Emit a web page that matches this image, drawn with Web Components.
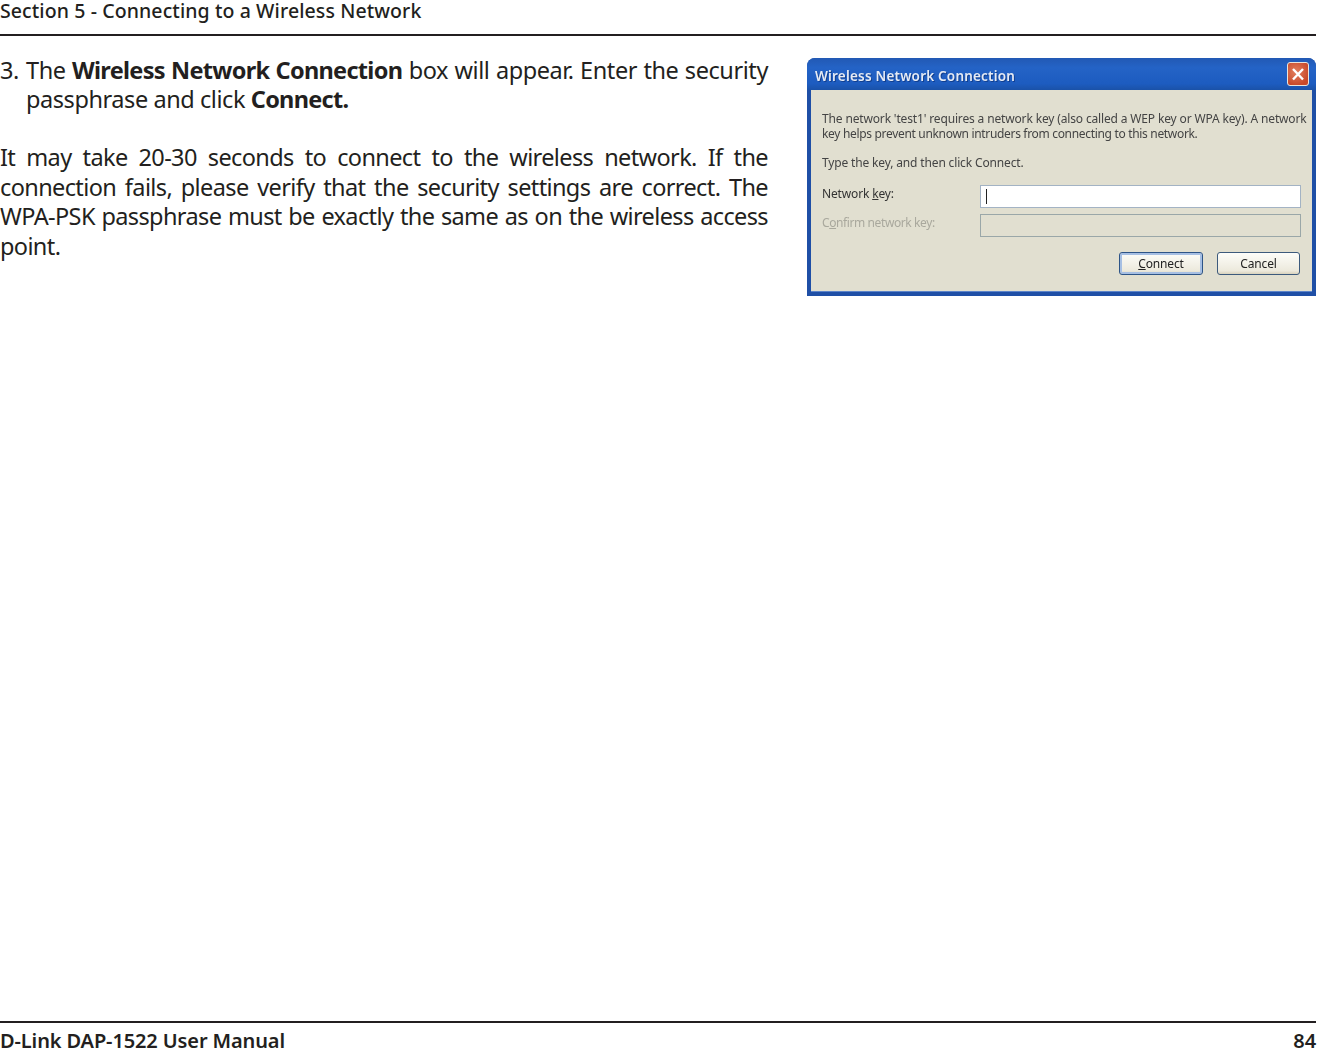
<!DOCTYPE html>
<html>
<head>
<meta charset="utf-8">
<title>D-Link DAP-1522 User Manual</title>
<style>
  html, body { margin: 0; padding: 0; background: #fff; }
</style>
</head>
<body>
<manual-page>
  <manual-header slot="header">Section 5 - Connecting to a Wireless Network</manual-header>
  <manual-step number="3.">The <b>Wireless Network Connection</b> box will appear. Enter the security passphrase and click <b>Connect.</b></manual-step>
  <manual-para>It may take 20-30 seconds to connect to the wireless network. If the connection fails, please verify that the security settings are correct. The WPA-PSK passphrase must be exactly the same as on the wireless access point.</manual-para>
  <xp-dialog slot="figure" heading="Wireless Network Connection"></xp-dialog>
  <manual-footer slot="footer" page="84">D-Link DAP-1522 User Manual</manual-footer>
</manual-page>

<script>
const FONT = "'Noto Sans', 'Open Sans', sans-serif";

class ManualPage extends HTMLElement {
  constructor() {
    super();
    this.attachShadow({ mode: 'open' }).innerHTML = `
      <style>
        :host { display: flex; flex-direction: column; width: 1316px; height: 1049px; font-family: ${FONT}; color: #231f20; }
        .content { flex: 1; display: flex; padding-top: 20px; }
        .text { width: 768px; }
        .figure { margin-left: 39px; padding-top: 2px; }
      </style>
      <slot name="header"></slot>
      <div class="content">
        <div class="text"><slot></slot></div>
        <div class="figure"><slot name="figure"></slot></div>
      </div>
      <slot name="footer"></slot>`;
  }
}

class ManualHeader extends HTMLElement {
  constructor() {
    super();
    this.attachShadow({ mode: 'open' }).innerHTML = `
      <style>
        :host { display: block; height: 34px; border-bottom: 2px solid #231f20; font-size: 19.5px; font-weight: 500; line-height: 22px; letter-spacing: 0.1px; white-space: nowrap; }
      </style>
      <slot></slot>`;
  }
}

class ManualFooter extends HTMLElement {
  constructor() {
    super();
    this.attachShadow({ mode: 'open' }).innerHTML = `
      <style>
        :host { display: flex; justify-content: space-between; box-sizing: border-box; height: 28px; padding-top: 9px; border-top: 2px solid #231f20; font-size: 20px; font-weight: 600; line-height: 17px; letter-spacing: -0.12px; white-space: nowrap; }
      </style>
      <span><slot></slot></span><span class="page"></span>`;
  }
  connectedCallback() {
    this.shadowRoot.querySelector('.page').textContent = this.getAttribute('page');
  }
}

class ManualStep extends HTMLElement {
  constructor() {
    super();
    this.attachShadow({ mode: 'open' }).innerHTML = `
      <style>
        :host { display: flex; font-size: 23.5px; line-height: 29px; letter-spacing: -0.43px; margin-bottom: 29px; }
        .num { flex: 0 0 26px; }
        .body { flex: 1; text-align: justify; }
        ::slotted(b) { font-weight: 700; letter-spacing: -0.7px; }
      </style>
      <span class="num"></span><span class="body"><slot></slot></span>`;
  }
  connectedCallback() {
    this.shadowRoot.querySelector('.num').textContent = this.getAttribute('number');
  }
}

class ManualPara extends HTMLElement {
  constructor() {
    super();
    this.attachShadow({ mode: 'open' }).innerHTML = `
      <style>
        :host { display: block; font-size: 23.5px; line-height: 29.6px; letter-spacing: -0.62px; text-align: justify; }
      </style>
      <slot></slot>`;
  }
}

class XpButton extends HTMLElement {
  constructor() {
    super();
    this.attachShadow({ mode: 'open' }).innerHTML = `
      <style>
        :host { display: flex; align-items: center; justify-content: center; box-sizing: border-box; width: 83px; height: 23px; border: 1px solid #3c5a7c; border-radius: 3px; background: linear-gradient(#fdfdf9, #ece9dc 85%, #d8d2bd); font-size: 12px; color: #222; }
        :host([default]) { width: 84px; box-shadow: inset 0 0 0 2px #a6bfe3; border-color: #2d5487; }
      </style>
      <span><slot></slot></span>`;
  }
}

class XpField extends HTMLElement {
  constructor() {
    super();
    this.attachShadow({ mode: 'open' }).innerHTML = `
      <style>
        :host { display: flex; align-items: center; height: 23px; font-size: 12px; color: #333; }
        :host([disabled]) { color: #a9a89d; letter-spacing: -0.4px; }
        .label { width: 158px; padding-bottom: 6px; }
        .box { flex: 1; box-sizing: border-box; height: 23px; border: 1px solid #a3b3c4; background: #fff; padding: 3px 5px; }
        :host([disabled]) .box { background: #e1dfd0; border-color: #9aa7a8; }
        .caret { display: block; width: 1px; height: 15px; background: #222; }
        :host([disabled]) .caret { display: none; }
      </style>
      <span class="label"><slot></slot></span>
      <span class="box"><span class="caret"></span></span>`;
  }
}

class XpDialog extends HTMLElement {
  constructor() {
    super();
    this.attachShadow({ mode: 'open' }).innerHTML = `
      <style>
        :host { display: flex; flex-direction: column; box-sizing: border-box; width: 509px; height: 238px; border-radius: 8px 8px 0 0; background: #1f4fa6; font-family: ${FONT}; filter: blur(0.3px); }
        .title { flex: 0 0 32px; box-sizing: border-box; display: flex; align-items: center; justify-content: space-between; padding: 0 7px 0 8px; border-radius: 8px 8px 0 0; background: linear-gradient(#2259b4, #2463c6 30%, #1d5cc0 80%, #1a52a8); color: #e6ebf4; font-size: 13.5px; font-weight: 600; letter-spacing: 0.2px; text-shadow: 1px 1px 0 #123f8e; white-space: nowrap; }
        #heading { padding-top: 3px; }
        .close { box-sizing: border-box; width: 22px; height: 24px; border: 1px solid #e8e4dc; border-radius: 3px; background: radial-gradient(circle at 40% 40%, #e2805f, #c8492a 75%); display: block; }
        .close svg { display: block; }
        .body { flex: 1; margin: 0 4px 4px 4px; padding: 21px 0 0 11px; background: #e1dfd0; color: #444; font-size: 12px; letter-spacing: -0.15px; border-bottom: 1px solid #5d84c9; }
        p { margin: 0; line-height: 15px; white-space: nowrap; }
        .tight { letter-spacing: -0.32px; }
        .gap { margin-top: 14px; }
        .fields { margin: 15px 11px 0 0; display: flex; flex-direction: column; gap: 6px; }
        .buttons { margin: 15px 12px 0 0; display: flex; justify-content: flex-end; gap: 14px; }
      </style>
      <div class="title">
        <span id="heading"></span>
        <span class="close">
          <svg width="20" height="22" viewBox="0 0 20 22"><path d="M5 6l10 10.500M15 6L5 16.500" stroke="#fff" stroke-width="2.4" fill="none"/></svg>
        </span>
      </div>
      <div class="body">
        <p>The network 'test1' requires a network key (also called a WEP key or WPA key). A network</p>
        <p class="tight">key helps prevent unknown intruders from connecting to this network.</p>
        <p class="gap">Type the key, and then click Connect.</p>
        <div class="fields">
          <xp-field>Network <u>k</u>ey:</xp-field>
          <xp-field disabled>C<u>o</u>nfirm network key:</xp-field>
        </div>
        <div class="buttons">
          <xp-button default><u>C</u>onnect</xp-button>
          <xp-button>Cancel</xp-button>
        </div>
      </div>`;
  }
  connectedCallback() {
    this.shadowRoot.getElementById('heading').textContent = this.getAttribute('heading');
  }
}

customElements.define('manual-page', ManualPage);
customElements.define('manual-header', ManualHeader);
customElements.define('manual-footer', ManualFooter);
customElements.define('manual-step', ManualStep);
customElements.define('manual-para', ManualPara);
customElements.define('xp-button', XpButton);
customElements.define('xp-field', XpField);
customElements.define('xp-dialog', XpDialog);
</script>
</body>
</html>
